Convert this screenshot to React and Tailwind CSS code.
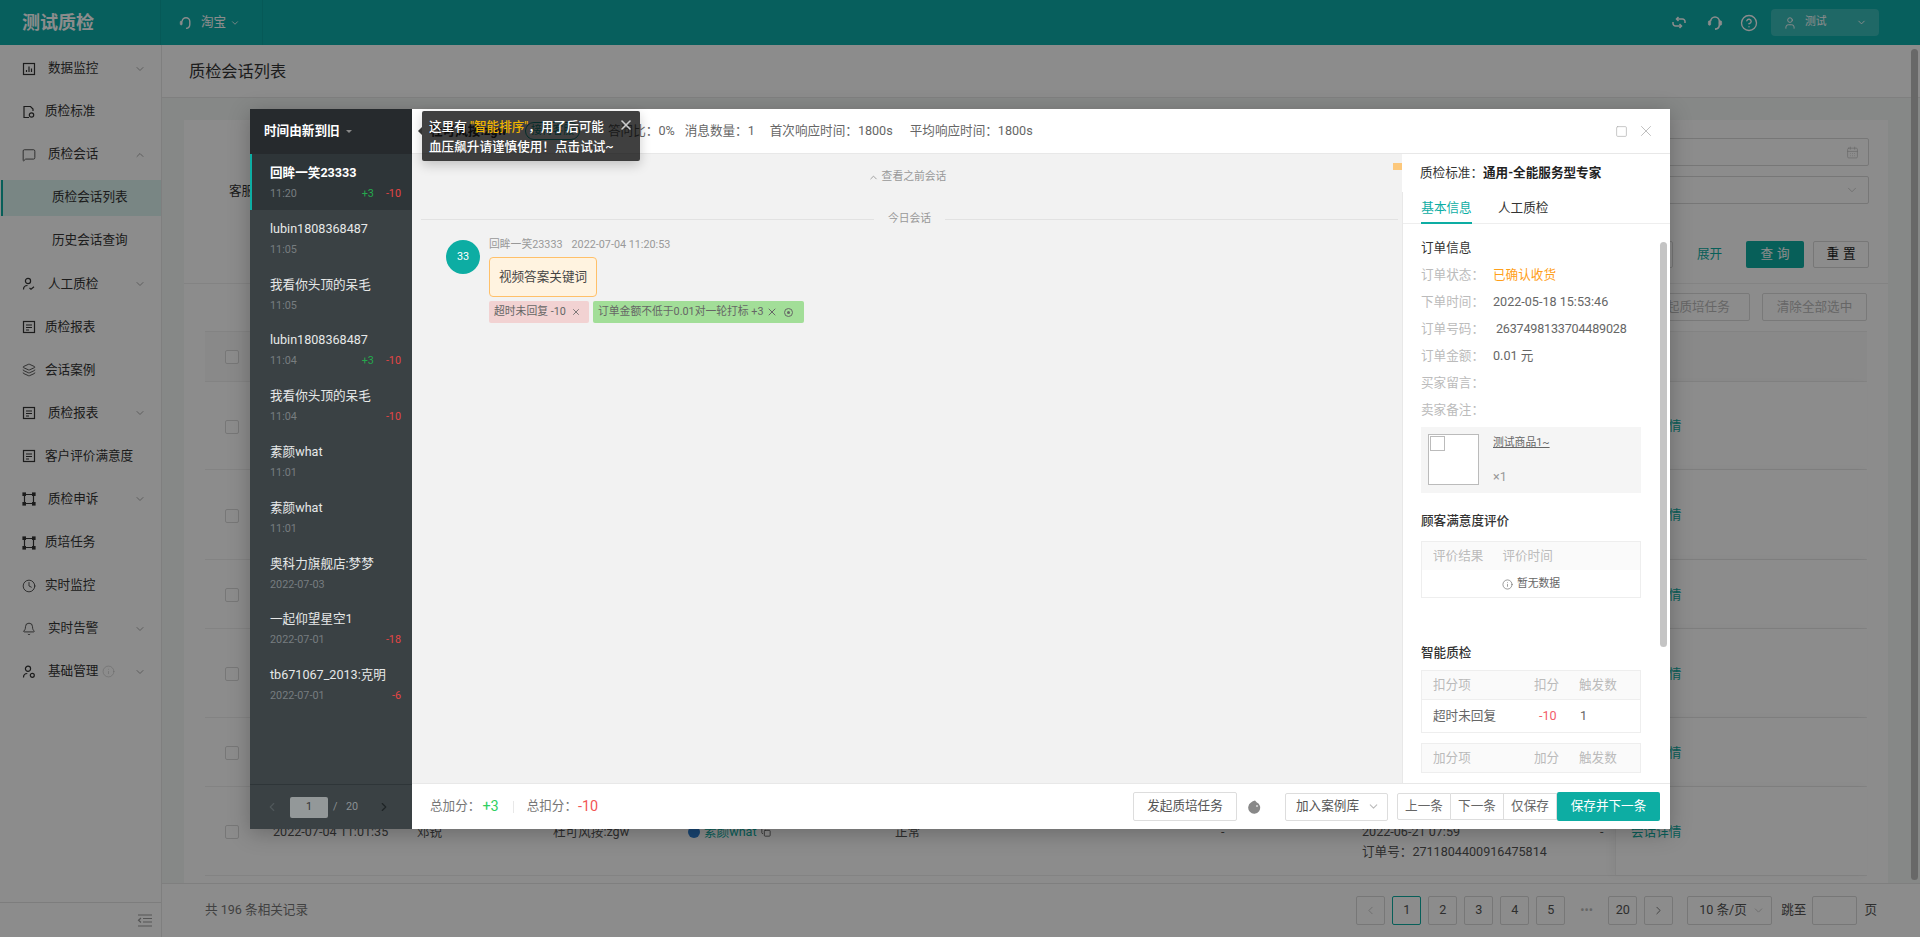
import {
  Bell,
  CalendarDays,
  ChevronDown,
  ChevronLeft,
  ChevronRight,
  ChevronUp,
  CircleHelp,
  Clock,
  Copy,
  Info,
  Layers,
  MessageSquare,
  Square,
  User,
  X,
} from 'lucide-react'

const teal = 'text-[#0dada3]'
// full-width punctuation, the reference uses these throughout
const colon = '\uFF1A'
const comma = '\uFF0C'
const bang = '\uFF01'

function Glyph({ children }) {
  return (
    <svg width="14" height="14" viewBox="0 0 14 14" fill="none" stroke="currentColor" strokeWidth="1.2">
      {children}
    </svg>
  )
}

const ChartIcon = () => (
  <Glyph>
    <rect x="1.5" y="1.5" width="11" height="11" />
    <path d="M4.5 10V8M7 10V4.5M9.5 10V6.5" />
  </Glyph>
)
const FileIcon = () => (
  <Glyph>
    <path d="M7 12.5H2V1.5h6.5l2.5 2.5v2" />
    <circle cx="9.5" cy="10" r="2.2" />
  </Glyph>
)
const PersonIcon = () => (
  <Glyph>
    <circle cx="6" cy="4" r="2.6" />
    <path d="M1.5 12.5c0-2.6 1.8-4 4-4M7.5 11l1.5 1.2 3-2.4" />
  </Glyph>
)
const ReportIcon = () => (
  <Glyph>
    <rect x="1.5" y="1.5" width="11" height="11" />
    <path d="M4 5h6M4 7.5h6M4 10h3" />
  </Glyph>
)
const NodesIcon = () => (
  <Glyph>
    <path d="M2.5 2.5h9M2.5 11.5h9M2.5 2.5v9M11.5 2.5v9" />
    <rect x="1" y="1" width="2.4" height="2.4" fill="currentColor" />
    <rect x="10.6" y="1" width="2.4" height="2.4" fill="currentColor" />
    <rect x="1" y="10.6" width="2.4" height="2.4" fill="currentColor" />
    <rect x="10.6" y="10.6" width="2.4" height="2.4" fill="currentColor" />
  </Glyph>
)
const AdminIcon = () => (
  <Glyph>
    <circle cx="6" cy="3.8" r="2.6" />
    <path d="M1.5 12.5c0-2.4 1.6-4 3.8-4" />
    <circle cx="10.3" cy="10.3" r="2" />
  </Glyph>
)

// customer service earpiece, used for the shop switch and the header
const ServiceIcon = ({ size = 14, className = '', both }) => (
  <svg className={className} width={size} height={size} viewBox="0 0 14 14" fill="none" stroke="currentColor" strokeWidth="1.4">
    <path d="M3.2 5.5a3.8 3.8 0 0 1 7.6 0v3c0 2.200-1.400 3.700-3.800 3.900" />
    <rect x="1.2" y="5" width="2" height="4" rx="1" fill="currentColor" strokeWidth="0.6" />
    {both && <rect x="10.800" y="5" width="2" height="4" rx="1" fill="currentColor" strokeWidth="0.6" />}
  </svg>
)

const SwapIcon = ({ className = '' }) => (
  <svg className={className} width="14" height="13" viewBox="0 0 14 13" fill="none" stroke="currentColor" strokeWidth="1.5">
    <path d="M5 3h5.500A2.500 2.500 0 0 1 13 5.500v1.500M9 10H3.500A2.500 2.500 0 0 1 1 7.500V6" />
    <path d="M6.500 1L4.500 3l2 2M7.500 8l2 2-2 2" />
  </svg>
)

const menu = [
  { label: '数据监控', icon: <ChartIcon />, arrow: 'down' },
  { label: '质检标准', icon: <FileIcon /> },
  { label: '质检会话', icon: <MessageSquare size={14} strokeWidth={1.4} />, arrow: 'up', open: true },
  { label: '质检会话列表', sub: true, active: true },
  { label: '历史会话查询', sub: true },
  { label: '人工质检', icon: <PersonIcon />, arrow: 'down' },
  { label: '质检报表', icon: <ReportIcon /> },
  { label: '会话案例', icon: <Layers size={14} strokeWidth={1.4} /> },
  { label: '质检报表', icon: <ReportIcon />, arrow: 'down' },
  { label: '客户评价满意度', icon: <ReportIcon /> },
  { label: '质检申诉', icon: <NodesIcon />, arrow: 'down' },
  { label: '质培任务', icon: <NodesIcon /> },
  { label: '实时监控', icon: <Clock size={14} strokeWidth={1.4} /> },
  { label: '实时告警', icon: <Bell size={14} strokeWidth={1.4} />, arrow: 'down' },
  { label: '基础管理', icon: <AdminIcon />, arrow: 'down', info: true },
]

const sessions = [
  { name: '回眸一笑23333', time: '11:20', plus: '+3', minus: '-10', active: true },
  { name: 'lubin1808368487', time: '11:05' },
  { name: '我看你头顶的呆毛', time: '11:05' },
  { name: 'lubin1808368487', time: '11:04', plus: '+3', minus: '-10' },
  { name: '我看你头顶的呆毛', time: '11:04', minus: '-10' },
  { name: '素颜what', time: '11:01' },
  { name: '素颜what', time: '11:01' },
  { name: '奥科力旗舰店:梦梦', time: '2022-07-03' },
  { name: '一起仰望星空1', time: '2022-07-01', minus: '-18' },
  { name: 'tb671067_2013:克明', time: '2022-07-01', minus: '-6' },
]

const orderRows = [
  ['订单状态', '已确认收货', 'text-[#ff9f1a]'],
  ['下单时间', '2022-05-18 15:53:46', 'text-[#666]'],
  ['订单号码', '\u00a02637498133704489028', 'text-[#666] tracking-[-0.2px]'],
  ['订单金额', '0.01 元', 'text-[#666]'],
  ['买家留言', '', ''],
  ['卖家备注', '', ''],
]

const rowHeights = ['h-[88px]', 'h-[90px]', 'h-[69px]', 'h-[89px]', 'h-[69px]', 'h-[89px]']

function Sidebar() {
  return (
    <aside className="w-[162px] shrink-0 flex flex-col bg-white border-r border-[#e8e8e8]">
      <nav className="flex-1 pt-[2px]">
        {menu.map((item, i) => (
          <div key={i} className="h-[43.1px] flex items-center">
            <div
              className={`w-full flex items-center text-[12.6px] text-[#333] ${
                item.active ? 'h-[36px] ml-[1px] border-l-2 border-[#0dada3] bg-[#dcf4f1]' : 'h-full'
              } ${item.active || item.open ? teal : ''}`}
            >
              {item.sub ? (
                <span className={item.active ? 'pl-[49px]' : 'pl-[52px]'}>{item.label}</span>
              ) : (
                <>
                  <span className="w-[22px] shrink-0" />
                  <span className="w-[14px] shrink-0 flex justify-center">{item.icon}</span>
                  <span className={item.arrow ? 'ml-[12px]' : 'ml-[9px]'}>{item.label}</span>
                  {item.info && <Info size={13} strokeWidth={1} className="ml-[4px] text-[#bbb]" />}
                  {item.arrow === 'down' && <ChevronDown size={12} className="ml-auto mr-[15px] text-[#aaa]" strokeWidth={2} />}
                  {item.arrow === 'up' && <ChevronUp size={12} className="ml-auto mr-[15px] text-[#aaa]" strokeWidth={2} />}
                </>
              )}
            </div>
          </div>
        ))}
      </nav>
      <div className="h-[35px] border-t border-[#e4e4e4] flex items-center justify-end pr-[9px] text-[#999]">
        <svg width="15" height="13" viewBox="0 0 15 13" fill="none" stroke="currentColor" strokeWidth="1.2">
          <path d="M1 1h14M6 4.500h9M6 8h9M1 12h14M4 4L1.500 6.200 4 8.500" />
        </svg>
      </div>
    </aside>
  )
}

function PageBehind() {
  return (
    <main className="flex-1 min-w-0 flex flex-col">
      <div className="h-[53px] shrink-0 bg-white border-b border-[#e8e8e8] flex items-center pl-[27px] pt-[2px] text-[16.2px] text-[#333]">
        质检会话列表
      </div>
      <div className="flex-1 min-h-0 pl-[22px] pr-[32px] pt-[22px] bg-[#f4f7f6]">
        <div className="h-full bg-white flex flex-col overflow-hidden">
          <div className="relative">
            <div className="absolute left-[45px] top-[62px] text-[12.6px] leading-[18px] text-[#333]">客服账号</div>
            <div className="pt-[18px] flex flex-col items-end pr-[19px]">
              <div className="w-[420px] h-[28px] border border-[#d9d9d9] rounded-[2px] flex items-center justify-end pr-[9px] text-[#bbb]">
                <CalendarDays size={13} strokeWidth={1.2} />
              </div>
              <div className="mt-[10px] w-[420px] h-[28px] border border-[#d9d9d9] rounded-[2px] flex items-center justify-end pr-[9px] text-[#bbb]">
                <ChevronDown size={14} strokeWidth={1.2} />
              </div>
              <div className="mt-[37px] flex items-center text-[12.6px]">
                <div className="w-[200px] h-[27px] border border-[#d9d9d9] rounded-[2px]" />
                <span className={`ml-[24px] w-[49px] ${teal}`}>展开</span>
                <button className="w-[58px] h-[27px] rounded-[2px] bg-[#0dada3] text-white tracking-[4px] pl-[4px]">查询</button>
                <button className="ml-[9px] w-[56px] h-[27px] rounded-[2px] border border-[#d9d9d9] text-[#222] tracking-[4px] pl-[4px]">重置</button>
              </div>
            </div>
          </div>
          <div className="mt-[15px] border-t border-[#eee]" />
          <div className="mt-[9px] flex justify-end gap-[12px] pr-[21px] text-[12.6px] text-[#bbb]">
            <span className="w-[116px] h-[28px] border border-[#ddd] rounded-[2px] flex items-center justify-center">发起质培任务</span>
            <span className="w-[105px] h-[28px] border border-[#ddd] rounded-[2px] flex items-center justify-center whitespace-nowrap">清除全部选中</span>
          </div>
          <div className="mt-[10px] mx-[21px] border-y border-[#eee] bg-[#fafafa] h-[51px] pl-[20px] flex items-center">
            <span className="w-[14px] h-[14px] border border-[#d9d9d9] rounded-[2px] bg-white" />
          </div>
          <div className="mx-[21px] text-[12.6px] text-[#555]">
            {rowHeights.map((h, i) => (
              <div key={i} className={`${h} relative flex items-center border-b border-[#eee] pl-[20px] pt-[2px]`}>
                <span className="w-[14px] h-[14px] border border-[#d9d9d9] rounded-[2px] bg-white shrink-0" />
                {i === 5 && (
                  <>
                    <span className="ml-[34px] w-[144px] shrink-0">2022-07-04 11:01:35</span>
                    <span className="w-[136px] shrink-0">邓锐</span>
                    <span className="w-[135px] shrink-0">杜可风按:zgw</span>
                    <span className="w-[207px] shrink-0 flex items-center gap-[4px] text-[#0dada3]">
                      <span className="w-[12px] h-[12px] rounded-full bg-[#2f7fd0]" />
                      素颜what
                      <Copy size={10} className="text-[#555]" />
                    </span>
                    <span className="w-[326px] shrink-0">正常</span>
                    <span className="w-[141px] shrink-0">-</span>
                    <span className="w-[238px] shrink-0 leading-[20px]">
                      &nbsp;
                      <br />
                      2022-06-21 07:59
                      <br />
                      订单号{colon}2711804400916475814
                    </span>
                    <span>-</span>
                  </>
                )}
                <div className="absolute right-0 inset-y-0 w-[252px] border-l border-[#f0f0f0] pl-[15px] pt-[2px] flex items-center text-[#0dada3] bg-white shadow-[-4px_0_8px_rgba(0,0,0,0.04)]">
                  会话详情
                </div>
              </div>
            ))}
          </div>
        </div>
      </div>
      <div className="h-[54px] shrink-0 bg-white border-t border-[#e8e8e8] flex items-center pl-[43px] pr-[43px] text-[12.6px] text-[#777]">
        <span>共 196 条相关记录</span>
        <div className="ml-auto flex items-center">
          <Pager />
        </div>
      </div>
    </main>
  )
}

function PageBox({ children, on, className = '' }) {
  return (
    <span
      className={`w-[29px] h-[29px] rounded-[2px] border flex items-center justify-center text-[12.6px] ${
        on ? 'border-[#0dada3]' : 'border-[#d9d9d9]'
      } ${className || 'text-[#555]'}`}
    >
      {children}
    </span>
  )
}

function Pager() {
  return (
    <>
      <div className="flex items-center gap-[7px]">
        <PageBox className="text-[#bbb]">
          <ChevronLeft size={13} strokeWidth={1.4} />
        </PageBox>
        <PageBox on>1</PageBox>
        <PageBox>2</PageBox>
        <PageBox>3</PageBox>
        <PageBox>4</PageBox>
        <PageBox>5</PageBox>
        <span className="w-[29px] text-center text-[#bbb] text-[12.6px] whitespace-nowrap">•••</span>
        <PageBox>20</PageBox>
        <PageBox>
          <ChevronRight size={13} strokeWidth={1.4} />
        </PageBox>
      </div>
      <span className="ml-[14px] w-[85px] h-[29px] border border-[#d9d9d9] rounded-[2px] flex items-center justify-between pl-[11px] pr-[6px] text-[#555] whitespace-nowrap">
        10 条/页
        <ChevronDown size={13} strokeWidth={1.4} className="text-[#bbb]" />
      </span>
      <span className="ml-[9px] text-[#555]">跳至</span>
      <span className="ml-[6px] w-[45px] h-[29px] border border-[#d9d9d9] rounded-[2px]" />
      <span className="ml-[7px] text-[#555]">页</span>
    </>
  )
}

function SessionList() {
  return (
    <div className="w-[162px] shrink-0 flex flex-col bg-[#3a4144]">
      <div className="h-[45px] shrink-0 bg-[#262a2d] flex items-center pl-[14px] text-[12.6px] font-bold text-white">
        时间由新到旧
        <span className="ml-[6px] border-x-[3px] border-t-[3px] border-x-transparent border-t-[#888]" />
      </div>
      <div className="flex-1 min-h-0">
        {sessions.map((s, i) => (
          <div
            key={i}
            className={`h-[55.8px] pt-[10px] pr-[11px] ${
              s.active ? 'bg-[#2e3538] border-l-2 border-[#0dada3] pl-[18px]' : 'pl-[20px]'
            }`}
          >
            <div className={`text-[12.6px] leading-[18px] ${s.active ? 'font-bold text-white' : 'text-[#e6e8e8]'}`}>{s.name}</div>
            <div className="mt-[3px] flex items-center text-[10.8px] leading-[17px] text-[#777d80]">
              <span>{s.time}</span>
              <span className="ml-auto text-[#25a84d]">{s.plus}</span>
              {s.minus && <span className="ml-[12px] text-[#e54545]">{s.minus}</span>}
            </div>
          </div>
        ))}
      </div>
      <div className="h-[45px] shrink-0 border-t border-[#2e3538] flex items-center pl-[15px] text-[10.8px] text-[#8a9093]">
        <ChevronLeft size={14} className="text-[#50575a]" />
        <span className="ml-[11px] w-[38px] h-[21px] rounded-[2px] bg-[#939899] text-[#333] flex items-center justify-center">1</span>
        <span className="ml-[5px] w-[4px]">/</span>
        <span className="ml-[9px] w-[12px]">20</span>
        <ChevronRight size={14} className="ml-[19px] text-[#1f2426]" />
      </div>
    </div>
  )
}

function ChatPane() {
  return (
    <div className="flex-1 min-w-0 relative bg-[#f2f2f2] text-[10.8px]">
      <div className="h-[45px] pt-[1px] flex items-center justify-center gap-[3px] text-[#999]">
        <ChevronUp size={11} />
        查看之前会话
      </div>
      <div className="mt-[5px] ml-[9px] mr-[4px] flex items-center h-[30px] text-[#999]">
        <span className="flex-1 border-t border-[#e2e2e2]" />
        <span className="px-[14px]">今日会话</span>
        <span className="flex-1 border-t border-[#e2e2e2]" />
      </div>
      <div className="pl-[34px] flex gap-[9px]">
        <div className="w-[34px] h-[34px] mt-[6px] rounded-full bg-[#0dada3] text-white flex items-center justify-center">33</div>
        <div>
          <div className="h-[21px] pt-[1px] flex items-center text-[#999]">
            回眸一笑23333
            <span className="ml-[9px]">2022-07-04 11:20:53</span>
          </div>
          <div className="mt-[2px] w-[108px] h-[40px] rounded-[4px] border border-[#ffc069] bg-[#fff3e0] text-[12.6px] text-[#444] flex items-center justify-center">
            视频答案关键词
          </div>
          <div className="mt-[4px] flex gap-[4px] text-[#666]">
            <span className="h-[22px] w-[100px] rounded-[2px] bg-[#f2d2d2] flex items-center pl-[5px]">
              超时未回复 -10
              <X size={10} className="ml-[5px]" />
            </span>
            <span className="h-[22px] w-[211px] rounded-[2px] bg-[#a2de98] flex items-center pl-[5px]">
              订单金额不低于0.01对一轮打标 +3
              <X size={12} className="ml-[3px]" />
              <span className="ml-[6px] w-[9px] h-[9px] rounded-full border border-[#666] flex items-center justify-center">
                <span className="w-[3px] h-[3px] rounded-full bg-[#666]" />
              </span>
            </span>
          </div>
        </div>
      </div>
      <div className="absolute right-0 top-[9px] w-[9px] h-[7px] bg-[#fcc87c]" />
    </div>
  )
}

function SmallTable({ headers, row }) {
  return (
    <div className="border border-[#eee] text-[12.6px]">
      <div className="h-[28px] bg-[#fafafa] flex items-center text-[#bbb]">
        <span className="w-[112px] pl-[11px]">{headers[0]}</span>
        <span className="w-[45px]">{headers[1]}</span>
        <span>{headers[2]}</span>
      </div>
      {row && (
        <div className="h-[33px] border-t border-[#eee] flex items-center text-[#666]">
          <span className="w-[117px] pl-[11px]">{row[0]}</span>
          <span className="w-[41px] text-[#f25c6b]">{row[1]}</span>
          <span>{row[2]}</span>
        </div>
      )}
    </div>
  )
}

function DetailPane() {
  return (
    <div className="w-[268px] shrink-0 bg-white relative flex flex-col overflow-hidden">
      <div className="h-[38px] shrink-0 pl-[18px] flex items-center text-[12.6px] text-[#333]">
        质检标准{colon}
        <span className="font-bold text-[#222]">通用-全能服务型专家</span>
      </div>
      <div className="flex-1 min-h-0 border-l border-[#e8e8e8] overflow-hidden">
        <div className="h-[32px] border-b border-[#eee] pl-[18px] flex text-[12.6px] text-[#333]">
          <span className={`w-[51px] h-[32px] border-b-2 border-[#0dada3] text-center leading-[32px] whitespace-nowrap ${teal}`}>基本信息</span>
          <span className="ml-[26px] leading-[32px]">人工质检</span>
        </div>
        <div className="pl-[18px] pr-[29px] text-[12.6px]">
          <div className="mt-[15px] h-[18px] leading-[18px] text-[#333]">订单信息</div>
          <div className="mt-[5px]">
            {orderRows.map(([label, value, cls]) => (
              <div key={label} className="h-[27px] flex items-center">
                <span className="w-[72px] text-[#bbb]">
                  {label}
                  {colon}
                </span>
                <span className={cls}>{value}</span>
              </div>
            ))}
          </div>
          <div className="mt-[3px] h-[66px] bg-[#f5f5f5] pl-[7px] pt-[7px] flex">
            <div className="w-[51px] h-[51px] bg-white border border-[#bbb] p-[1px]">
              <div className="w-[15px] h-[15px] border border-[#bbb]" />
            </div>
            <div className="ml-[14px] flex flex-col text-[10.8px]">
              <span className="text-[#666] underline leading-[18px]">测试商品1~</span>
              <span className="mt-[16px] text-[12.6px] text-[#999]">×1</span>
            </div>
          </div>
          <div className="mt-[19px] h-[18px] leading-[18px] font-medium text-[#333]">顾客满意度评价</div>
          <div className="mt-[11px] border border-[#eee] h-[57px]">
            <div className="h-[28px] bg-[#fafafa] flex items-center pl-[11px] gap-[19px] text-[#bbb]">
              <span>评价结果</span>
              <span>评价时间</span>
            </div>
            <div className="h-[27px] pt-[1px] flex items-center justify-center gap-[4px] text-[10.8px] text-[#666]">
              <Info size={11} strokeWidth={1.4} />
              暂无数据
            </div>
          </div>
          <div className="mt-[46px] h-[18px] leading-[18px] font-medium text-[#333]">智能质检</div>
          <div className="mt-[8px]">
            <SmallTable headers={['扣分项', '扣分', '触发数']} row={['超时未回复', '-10', '1']} />
          </div>
          <div className="mt-[10px]">
            <SmallTable headers={['加分项', '加分', '触发数']} />
          </div>
        </div>
      </div>
      <div className="absolute right-[3px] top-[88px] w-[7px] h-[405px] rounded-full bg-[#c4c4c4]" />
    </div>
  )
}

function ReviewModal() {
  return (
    <div className="absolute left-[250px] top-[109px] w-[1420px] h-[720px] flex bg-white shadow-[0_4px_20px_rgba(0,0,0,0.25)]">
      <SessionList />
      <div className="flex-1 min-w-0 flex flex-col">
        <div className="h-[45px] shrink-0 border-b border-[#e8e8e8] flex items-center pl-[18px] pr-[15px] text-[12.6px] text-[#666]">
          <span className="font-bold text-[#333] w-[87px] whitespace-nowrap">杜可风按:zgw</span>
          <span className="ml-[8px] w-[55px] h-[18px] border border-[#0dada3] rounded-full text-[10.8px] text-[#0dada3] flex items-center justify-center whitespace-nowrap">接待客服</span>
          <span className="ml-[28px]">答问比{colon}0%</span>
          <span className="ml-[10px]">消息数量{colon}1</span>
          <span className="ml-[15px]">首次响应时间{colon}1800s</span>
          <span className="ml-[17px]">平均响应时间{colon}1800s</span>
          <Square size={13} strokeWidth={1.2} className="ml-auto text-[#aaa]" />
          <X size={18} strokeWidth={1} className="ml-[9px] text-[#aaa]" />
        </div>
        <div className="flex-1 min-h-0 flex">
          <ChatPane />
          <DetailPane />
        </div>
        <div className="h-[46px] shrink-0 border-t border-[#e8e8e8] flex items-center pl-[18px] pr-[10px] text-[12.6px] text-[#777]">
          <span>总加分{colon}</span>
          <span className="ml-[2px] text-[14.4px] text-[#2fcf62]">+3</span>
          <span className="ml-[14px] h-[12px] border-l border-[#e8e8e8]" />
          <span className="ml-[13px]">总扣分{colon}</span>
          <span className="ml-[1px] text-[14.4px] text-[#f25555]">-10</span>
          <button className="ml-auto w-[104px] h-[29px] border border-[#ddd] rounded-[2px] text-[#555]">发起质培任务</button>
          <svg className="ml-[11px]" width="14" height="15" viewBox="0 0 14 15">
            <path d="M7 1.500l1.600 1.700A6 6 0 1 1 3 3.600 6 6 0 0 1 7 1.500z" fill="#888" />
            <circle cx="9" cy="7" r="1" fill="#ddd" />
          </svg>
          <span className="ml-[23px] w-[103px] h-[28px] border border-[#ddd] rounded-[2px] flex items-center justify-between pl-[10px] pr-[7px] text-[#555] whitespace-nowrap">
            加入案例库
            <ChevronDown size={13} className="text-[#bbb]" />
          </span>
          <div className="ml-[9px] flex h-[27px] whitespace-nowrap">
            <span className="w-[54px] border border-[#ddd] rounded-l-[2px] flex items-center justify-center text-[#666]">上一条</span>
            <span className="w-[53px] border-y border-r border-[#ddd] flex items-center justify-center text-[#666]">下一条</span>
            <span className="w-[53px] border-y border-r border-[#ddd] flex items-center justify-center text-[#666]">仅保存</span>
          </div>
          <button className="w-[103px] h-[29px] rounded-[2px] bg-[#0dada3] text-white whitespace-nowrap">保存并下一条</button>
        </div>
      </div>
    </div>
  )
}

export default function App() {
  return (
    <div className="relative w-[1920px] h-[937px] overflow-hidden flex flex-col bg-white font-['Roboto','Noto_Sans_CJK_SC',sans-serif]">
      <header className="h-[45px] shrink-0 bg-[#0dadaa] flex items-center text-white">
        <div className="w-[161px] h-full border-r border-[#0ca29f] pl-[22px] flex items-center text-[18px] font-bold">测试质检</div>
        <div className="w-[102px] h-full border-r border-[#0ca29f] pl-[18px] flex items-center text-[12.6px]">
          <ServiceIcon />
          <span className="ml-[8px]">淘宝</span>
          <ChevronDown size={10} className="ml-[4px]" />
        </div>
        <div className="ml-auto flex items-center pr-[41px]">
          <SwapIcon />
          <ServiceIcon size={16} both className="ml-[21px]" />
          <CircleHelp size={18} strokeWidth={1.8} className="ml-[17px]" />
          <div className="ml-[13px] w-[108px] h-[27px] rounded-[4px] bg-[#3abdba] flex items-center pl-[12px] pr-[12px] text-[10.8px]">
            <User size={14} strokeWidth={1.6} />
            <span className="ml-[8px]">测试</span>
            <ChevronDown size={11} className="ml-auto" />
          </div>
        </div>
      </header>
      <div className="flex-1 min-h-0 flex">
        <Sidebar />
        <PageBehind />
      </div>
      {/* page scrollbar */}
      <div className="absolute left-[1911px] top-[49px] w-[7px] h-[831px] rounded-full bg-[#bdbdbd]" />
      {/* mask */}
      <div className="absolute inset-0 bg-black/45" />
      <ReviewModal />
      {/* guide tip */}
      <div className="absolute left-[422px] top-[111px] w-[218px] h-[50px] rounded-[2px] bg-black/75 shadow-[0_4px_12px_rgba(0,0,0,0.2)] pl-[7px] pt-[6px] text-[12.6px] leading-[20px] font-medium text-white">
        <span className="absolute -left-[4px] top-[16px] border-y-[4px] border-r-[4px] border-y-transparent border-r-[#333]" />
        <div>
          这里有 <span className="text-[#f0b400]">"智能排序"</span>
          {comma}用了后可能
        </div>
        <div>血压飙升请谨慎使用{bang}点击试试~</div>
        <X size={16} strokeWidth={2.4} className="absolute right-[6px] top-[6px] text-[#ccc]" />
      </div>
    </div>
  )
}
